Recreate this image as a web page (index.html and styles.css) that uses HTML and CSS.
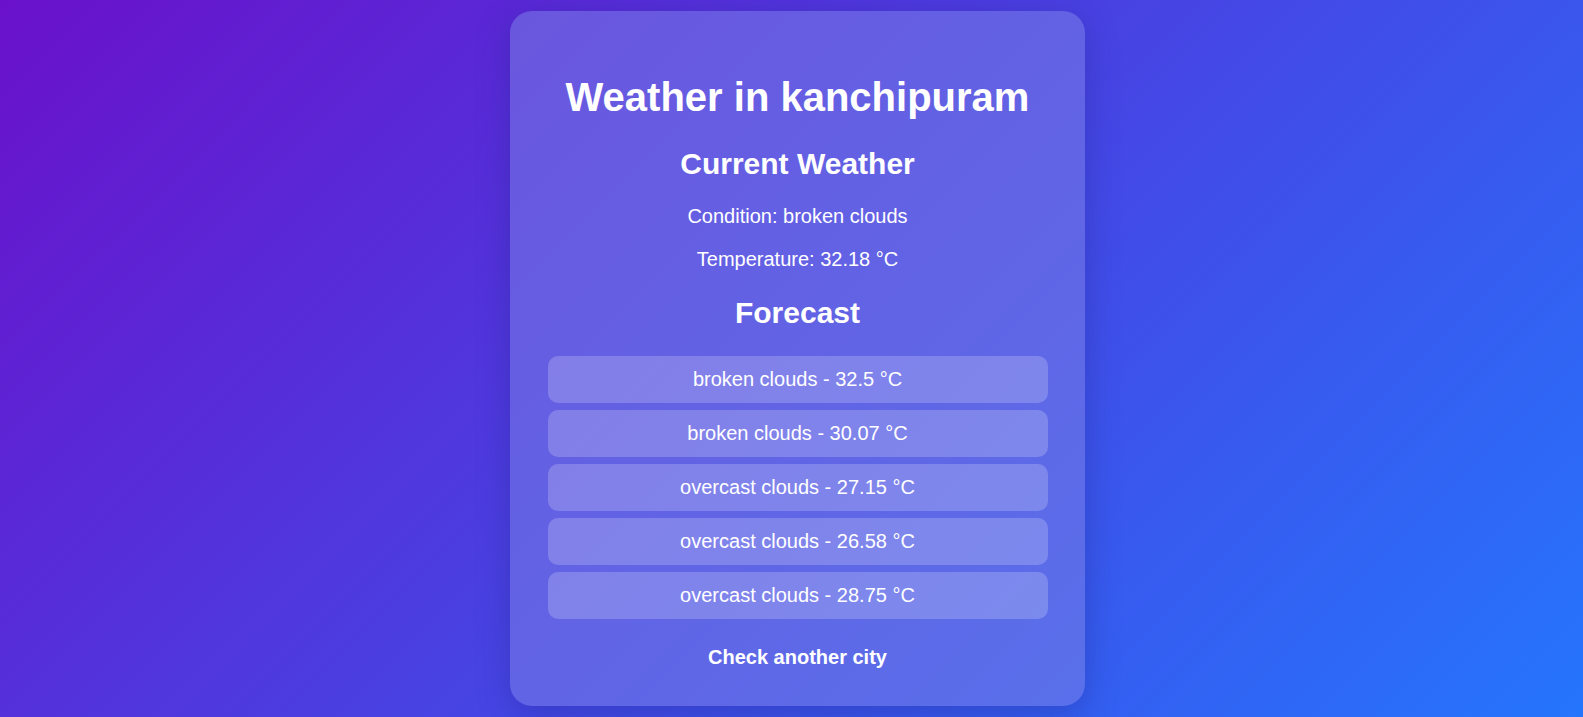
FILE: index.html
```html
<!DOCTYPE html>
<html lang="en">
<head>
<meta charset="utf-8">
<title>Weather in kanchipuram</title>
<link rel="stylesheet" href="styles.css">
</head>
<body>
  <main class="card">
    <h1 class="title">Weather in kanchipuram</h1>
    <h2 class="section">Current Weather</h2>
    <p class="info">Condition: broken clouds</p>
    <p class="info">Temperature: 32.18 °C</p>
    <h2 class="section">Forecast</h2>
    <ul class="forecast">
      <li class="forecast-item">broken clouds - 32.5 °C</li>
      <li class="forecast-item">broken clouds - 30.07 °C</li>
      <li class="forecast-item">overcast clouds - 27.15 °C</li>
      <li class="forecast-item">overcast clouds - 26.58 °C</li>
      <li class="forecast-item">overcast clouds - 28.75 °C</li>
    </ul>
    <a class="back-link" href="#">Check another city</a>
  </main>
</body>
</html>
```

FILE: styles.css
```css
html, body {
  margin: 0;
  height: 100%;
}

body {
  font-family: "Liberation Sans", Arial, sans-serif;
  font-size: 20px;
  color: #fff;
  background: linear-gradient(135deg, #6a11cb, #2575fc);
  display: flex;
  align-items: center;
  justify-content: center;
  padding-left: 12px;
  box-sizing: border-box;
  overflow: hidden;
}

.card {
  width: 500px;
  padding: 38px 37.5px 37px;
  border-radius: 22px;
  background: rgba(121, 125, 230, 0.55);
  box-shadow: 0 8px 32px 0 rgba(31, 38, 135, 0.37);
  text-align: center;
  display: flex;
  flex-direction: column;
  align-items: stretch;
}

.title {
  font-size: 40px;
  font-weight: bold;
  margin: 26px 0 27px;
}

.section {
  font-size: 30px;
  font-weight: bold;
  margin: 0 0 24px;
}

.info {
  margin: 0 0 19.5px;
}

.info + .section {
  margin-top: 6px;
}

.forecast {
  list-style: none;
  margin: 2px 0 0;
  padding: 0;
  display: flex;
  flex-direction: column;
  gap: 7px;
}

.forecast-item {
  background: rgba(255, 255, 255, 0.2);
  border-radius: 10px;
  padding: 12px;
}

.back-link {
  margin-top: 27px;
  color: #fff;
  font-weight: bold;
  text-decoration: none;
}
```
